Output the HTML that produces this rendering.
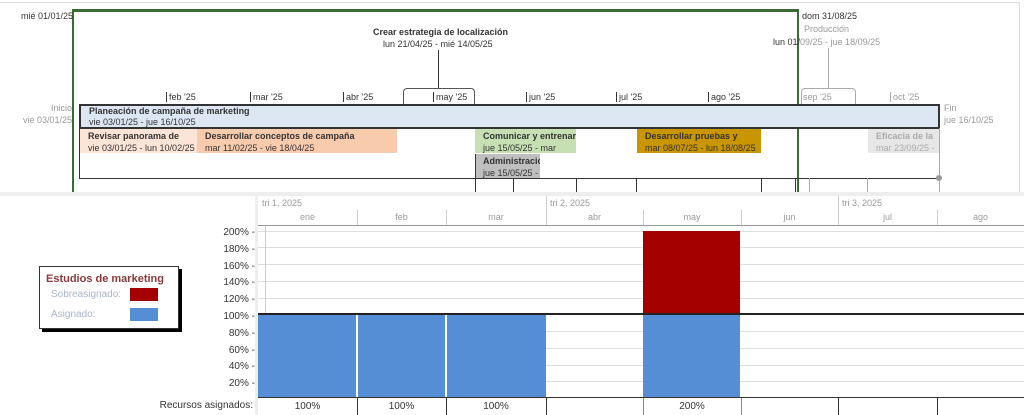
<!DOCTYPE html>
<html><head><meta charset="utf-8"><style>
*{margin:0;padding:0;box-sizing:border-box}
body{width:1024px;height:415px;background:#fff;position:relative;overflow:hidden;font-family:"Liberation Sans","DejaVu Sans",sans-serif;font-size:9px;color:#333}
.a{position:absolute;white-space:nowrap}
.b{font-weight:bold}
.g{color:#999}
.bar{position:absolute;padding:1px 0 0 8px;line-height:12px;overflow:hidden;white-space:nowrap}
.tk{position:absolute;width:1px;background:#333}
.hl{position:absolute;left:258px;right:0;height:1px;background:#ddd}
.vl{position:absolute;width:1px;background:#ccc}
</style></head><body>
<div class="a" style="left:0;top:2px;width:1020px;height:1px;background:#ddd"></div>
<div class="a" style="left:1019px;top:2px;width:1px;height:190px;background:#ddd"></div>
<div class="a" style="left:72px;top:9px;width:727px;height:185px;border:2px solid #3a6b35;border-top-width:3px;border-bottom:none"></div>
<div class="a" style="left:21px;top:11px">mié 01/01/25</div>
<div class="a g" style="left:20px;top:102px;width:52px;text-align:right;line-height:12px">Inicio<br>vie 03/01/25</div>
<div class="a" style="left:802px;top:11px">dom 31/08/25</div>
<div class="a b" style="left:373px;top:27px">Crear estrategia de localización</div>
<div class="a" style="left:383px;top:39px">lun 21/04/25 - mié 14/05/25</div>
<div class="a" style="left:438px;top:50px;width:1px;height:38px;background:#333"></div>
<div class="a" style="left:403px;top:88px;width:72px;height:17px;border:1px solid #555;border-bottom:none;border-radius:4px 4px 0 0"></div>
<div class="a g" style="left:804px;top:24px">Producción</div>
<div class="a g" style="left:773px;top:37px"><span style="color:#333">lun 01/</span>09/25 - jue 18/09/25</div>
<div class="a" style="left:828px;top:48px;width:1px;height:40px;background:#aaa"></div>
<div class="a" style="left:801px;top:88px;width:55px;height:17px;border:1px solid #aaa;border-bottom:none;border-radius:4px 4px 0 0"></div>
<div class="a" style="left:166px;top:92px;border-left:1px solid #333;padding-left:2px">feb '25</div>
<div class="a" style="left:250px;top:92px;border-left:1px solid #333;padding-left:2px">mar '25</div>
<div class="a" style="left:343px;top:92px;border-left:1px solid #333;padding-left:2px">abr '25</div>
<div class="a" style="left:433px;top:92px;border-left:1px solid #333;padding-left:2px">may '25</div>
<div class="a" style="left:526px;top:92px;border-left:1px solid #333;padding-left:2px">jun '25</div>
<div class="a" style="left:616px;top:92px;border-left:1px solid #333;padding-left:2px">jul '25</div>
<div class="a" style="left:708px;top:92px;border-left:1px solid #333;padding-left:2px">ago '25</div>
<div class="a g" style="left:801px;top:92px;padding-left:2px">sep '25</div>
<div class="a g" style="left:890px;top:92px;border-left:1px solid #aaa;padding-left:2px">oct '25</div>
<div class="a" style="left:79px;top:128px;width:861px;height:51px;border:1px solid #333;border-top:none"></div>
<div class="bar" style="left:79px;top:104px;width:861px;height:25px;background:#dde7f4;border:2px solid #333;padding-top:0;line-height:11px"><b>Planeación de campaña de marketing</b><br>vie 03/01/25 - jue 16/10/25</div>
<div class="a g" style="left:944px;top:102px;line-height:12px">Fin<br>jue 16/10/25</div>
<div class="bar" style="left:80px;top:129px;width:117px;height:24px;background:#fce4d6"><b>Revisar panorama de</b><br>vie 03/01/25 - lun 10/02/25</div>
<div class="bar" style="left:197px;top:129px;width:200px;height:24px;background:#f8cbad"><b>Desarrollar conceptos de campaña</b><br>mar 11/02/25 - vie 18/04/25</div>
<div class="bar" style="left:475px;top:129px;width:101px;height:24px;background:#c6e0b4"><b>Comunicar y entrenar</b><br>jue 15/05/25 - mar</div>
<div class="bar" style="left:475px;top:154px;width:65px;height:24px;background:#bfbfbf"><b>Administració</b><br>jue 15/05/25 -</div>
<div class="bar" style="left:637px;top:129px;width:124px;height:24px;background:#c99600"><b>Desarrollar pruebas y</b><br>mar 08/07/25 - lun 18/08/25</div>
<div class="bar" style="left:868px;top:129px;width:71px;height:24px;background:#e7e7e7;color:#aaa"><b>Eficacia de la</b><br>mar 23/09/25 -</div>
<div class="tk" style="left:475px;top:154px;height:38px"></div>
<div class="tk" style="left:513px;top:178px;height:14px"></div>
<div class="tk" style="left:576px;top:178px;height:14px"></div>
<div class="tk" style="left:636px;top:178px;height:14px"></div>
<div class="tk" style="left:761px;top:178px;height:14px"></div>
<div class="tk" style="left:795px;top:178px;height:14px"></div>
<div class="tk" style="left:809px;top:178px;height:14px;background:#aaa"></div>
<div class="tk" style="left:867px;top:178px;height:14px;background:#aaa"></div>
<div class="tk" style="left:939px;top:128px;height:64px;background:#aaa"></div>
<div class="a" style="left:936px;top:175px;width:6px;height:6px;background:#999;border-radius:50%"></div>
<div class="a" style="left:0;top:192px;width:1024px;height:4px;background:#eee"></div>
<div class="a" style="left:255px;top:195px;width:3px;height:220px;background:#eee"></div>
<div class="a g" style="left:262px;top:198px">tri 1, 2025</div>
<div class="a g" style="left:550px;top:198px">tri 2, 2025</div>
<div class="a g" style="left:842px;top:198px">tri 3, 2025</div>
<div class="vl" style="left:546px;top:196px;height:29px"></div>
<div class="vl" style="left:838px;top:196px;height:29px"></div>
<div class="vl" style="left:357px;top:210px;height:15px"></div>
<div class="vl" style="left:446px;top:210px;height:15px"></div>
<div class="vl" style="left:643px;top:210px;height:15px"></div>
<div class="vl" style="left:741px;top:210px;height:15px"></div>
<div class="vl" style="left:937px;top:210px;height:15px"></div>
<div class="a g" style="left:258px;top:212px;width:99px;text-align:center">ene</div>
<div class="a g" style="left:357px;top:212px;width:89px;text-align:center">feb</div>
<div class="a g" style="left:446px;top:212px;width:100px;text-align:center">mar</div>
<div class="a g" style="left:546px;top:212px;width:97px;text-align:center">abr</div>
<div class="a g" style="left:643px;top:212px;width:98px;text-align:center">may</div>
<div class="a g" style="left:741px;top:212px;width:97px;text-align:center">jun</div>
<div class="a g" style="left:838px;top:212px;width:99px;text-align:center">jul</div>
<div class="a g" style="left:937px;top:212px;width:87px;text-align:center">ago</div>
<div class="a" style="left:258px;top:225px;width:766px;height:1px;background:#999"></div>
<div class="hl" style="top:231px"></div><div class="hl" style="top:247px"></div><div class="hl" style="top:264px"></div><div class="hl" style="top:281px"></div><div class="hl" style="top:298px"></div><div class="hl" style="top:331px"></div><div class="hl" style="top:348px"></div><div class="hl" style="top:365px"></div><div class="hl" style="top:381px"></div>
<div class="a" style="left:265px;top:226px;width:1px;height:172px;background:#ccc"></div>
<div class="a" style="left:258px;top:314px;width:288px;height:84px;background:#558ed5"></div>
<div class="a" style="left:356px;top:314px;width:2px;height:84px;background:#fff"></div>
<div class="a" style="left:445px;top:314px;width:2px;height:84px;background:#fff"></div>
<div class="a" style="left:643px;top:231px;width:97px;height:83px;background:#a50000"></div>
<div class="a" style="left:643px;top:314px;width:97px;height:84px;background:#558ed5"></div>
<div class="a" style="left:258px;top:313px;width:766px;height:2px;background:#222"></div>
<div class="a" style="left:258px;top:397px;width:766px;height:1px;background:#333"></div>
<div class="a" style="left:200px;top:225px;width:55px;text-align:right;line-height:16.8px;font-size:10px">200% -<br>180% -<br>160% -<br>140% -<br>120% -<br>100% -<br>80% -<br>60% -<br>40% -<br>20% -</div>
<div class="a" style="left:150px;top:400px;width:103px;text-align:right;font-size:10px">Recursos asignados:</div>
<div class="tk" style="left:357px;top:398px;height:17px"></div><div class="tk" style="left:446px;top:398px;height:17px"></div><div class="tk" style="left:546px;top:398px;height:17px"></div><div class="tk" style="left:643px;top:398px;height:17px;background:#888"></div><div class="tk" style="left:741px;top:398px;height:17px;background:#888"></div><div class="tk" style="left:838px;top:398px;height:17px"></div><div class="tk" style="left:937px;top:398px;height:17px"></div>
<div class="a" style="left:258px;top:401px;width:99px;text-align:center;font-size:10px">100%</div>
<div class="a" style="left:357px;top:401px;width:89px;text-align:center;font-size:10px">100%</div>
<div class="a" style="left:446px;top:401px;width:100px;text-align:center;font-size:10px">100%</div>
<div class="a" style="left:643px;top:401px;width:98px;text-align:center;font-size:10px">200%</div>
<div class="a" style="left:39px;top:266px;width:140px;height:63px;border:1px solid #333;background:#fff;box-shadow:3px 3px 0 #000">
<div class="a b" style="left:6px;top:6px;font-size:11px;color:#8b3a3a">Estudios de marketing</div>
<div class="a" style="left:11px;top:22px;font-size:10px;color:#a8b4c8">Sobreasignado:</div>
<div class="a" style="left:90px;top:21px;width:28px;height:13px;background:#a50000"></div>
<div class="a" style="left:11px;top:42px;font-size:10px;color:#a8b4c8">Asignado:</div>
<div class="a" style="left:90px;top:41px;width:28px;height:13px;background:#558ed5"></div>
</div>
</body></html>
